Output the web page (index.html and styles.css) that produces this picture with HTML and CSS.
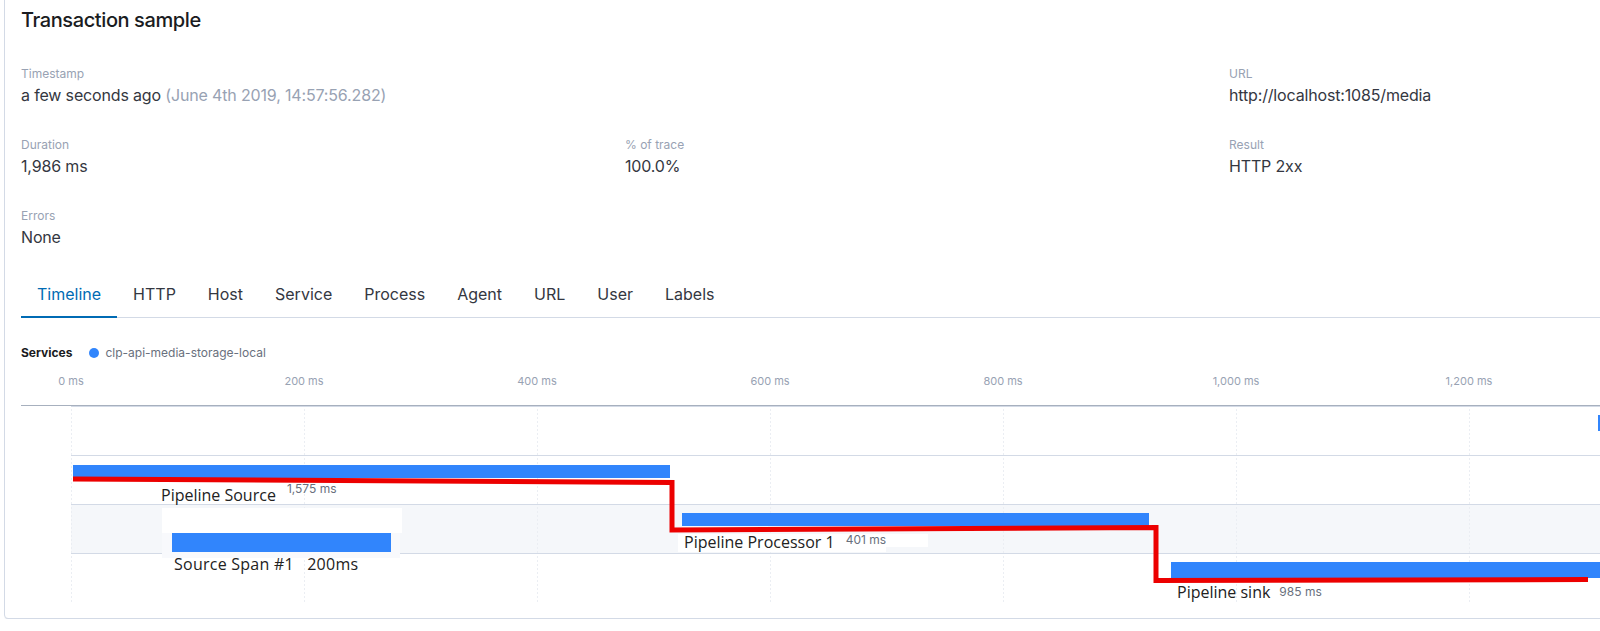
FILE: index.html
```html
<!DOCTYPE html>
<html lang="en">
<head>
<meta charset="utf-8">
<title>Transaction sample</title>
<link rel="stylesheet" href="styles.css">
</head>
<body>
<div class="page">
  <section class="card">
    <h2 class="title">Transaction sample</h2>

    <div class="meta">
      <div class="meta-item">
        <div class="meta-label">Timestamp</div>
        <div class="meta-value">a few seconds ago <span class="muted">(June 4th 2019, 14:57:56.282)</span></div>
      </div>
      <div class="meta-item"></div>
      <div class="meta-item">
        <div class="meta-label">URL</div>
        <div class="meta-value">http://localhost:1085/media</div>
      </div>
      <div class="meta-item">
        <div class="meta-label">Duration</div>
        <div class="meta-value">1,986 ms</div>
      </div>
      <div class="meta-item">
        <div class="meta-label">% of trace</div>
        <div class="meta-value">100.0%</div>
      </div>
      <div class="meta-item">
        <div class="meta-label">Result</div>
        <div class="meta-value">HTTP 2xx</div>
      </div>
      <div class="meta-item">
        <div class="meta-label">Errors</div>
        <div class="meta-value">None</div>
      </div>
    </div>

    <nav class="tabs">
      <span class="tab active">Timeline</span>
      <span class="tab">HTTP</span>
      <span class="tab">Host</span>
      <span class="tab">Service</span>
      <span class="tab">Process</span>
      <span class="tab">Agent</span>
      <span class="tab">URL</span>
      <span class="tab">User</span>
      <span class="tab">Labels</span>
    </nav>

    <div class="legend">
      <span class="legend-title">Services</span>
      <span class="dot"></span>
      <span class="legend-name">clp-api-media-storage-local</span>
    </div>

    <div class="axis">
      <span class="tick"><span>0 ms</span></span>
      <span class="tick"><span>200 ms</span></span>
      <span class="tick"><span>400 ms</span></span>
      <span class="tick"><span>600 ms</span></span>
      <span class="tick"><span>800 ms</span></span>
      <span class="tick"><span>1,000 ms</span></span>
      <span class="tick"><span>1,200 ms</span></span>
    </div>

    <div class="waterfall">
      <div class="row">
        <div class="bar bar-edge" style="margin-left:1527px;width:10px"></div>
      </div>

      <div class="row">
        <div class="bar bar-source" style="margin-left:2px;width:597px"></div>
        <div class="item-label label-source" style="margin-left:90px">
          <span class="span-name">Pipeline Source</span>
          <span class="span-dur">1,575 ms</span>
        </div>
      </div>

      <div class="row alt">
        <div class="row-inner">
          <div class="pasted-span" style="margin-left:91px">
            <div class="patch-white"></div>
            <div class="patch-light">
              <div class="bar bar-child" style="width:219px"></div>
            </div>
            <div class="pasted-text">Source Span #1   200ms</div>
          </div>
          <div class="processor" style="margin-left:276px">
            <div class="bar bar-proc" style="margin-left:4px;width:467px"></div>
            <div class="proc-label">
              <div class="name-box">
                <span class="span-name">Pipeline Processor 1</span>
                <span class="span-dur">401 ms</span>
              </div>
              <div class="patch-small"></div>
            </div>
          </div>
        </div>
      </div>

      <div class="row">
        <div class="bar bar-sink" style="margin-left:1100px;width:1148px"></div>
        <div class="item-label label-sink" style="margin-left:1106px">
          <span class="span-name">Pipeline sink</span>
          <span class="span-dur">985 ms</span>
        </div>
      </div>

      <svg class="trace-line" width="1600" height="200" viewBox="0 0 1600 200" aria-hidden="true">
        <polyline points="2,73 601,76.5 601,124 1085,121.5 1085,174.5 1517,173.5" fill="none" stroke="#EC0000" stroke-width="5" stroke-linejoin="miter"/>
      </svg>
    </div>
  </section>
</div>
</body>
</html>
```

FILE: styles.css
```css
html, body {
  margin: 0;
  padding: 0;
  background: #fff;
  overflow: hidden;
}

body {
  font-family: Inter, "Liberation Sans", sans-serif;
  color: #343741;
}

.page {
  padding-left: 4px;
}

.card {
  box-sizing: border-box;
  width: 1822px;
  margin-top: -9px;
  padding: 16px;
  background: #fff;
  border: 1px solid #D3DAE6;
  border-radius: 4px;
  box-shadow: 0 1px 1px -1px rgba(152, 162, 179, 0.3), 0 3px 2px -2px rgba(152, 162, 179, 0.3);
}

.title {
  margin: 0;
  font-size: 20px;
  line-height: 24px;
  font-weight: 500;
  letter-spacing: -0.02em;
  color: #1A1C21;
}

/* metadata grid */
.meta {
  display: grid;
  grid-template-columns: repeat(3, 1fr);
  column-gap: 24px;
  row-gap: 29px;
  margin-top: 33px;
}

.meta-label {
  font-size: 12px;
  line-height: 18px;
  color: #98A2B3;
}

.meta-value {
  font-size: 16px;
  line-height: 24px;
  letter-spacing: -0.01em;
  color: #343741;
}

.muted {
  color: #98A2B3;
}

/* tabs */
.tabs {
  display: flex;
  margin-top: 21px;
  border-bottom: 1px solid #D3DAE6;
}

.tab {
  padding: 12px 16px;
  margin-bottom: -1px;
  font-size: 16px;
  line-height: 24px;
  color: #343741;
}

.tab.active {
  color: #006BB4;
  box-shadow: inset 0 -2px 0 #006BB4;
}

/* legend */
.legend {
  display: flex;
  align-items: center;
  margin-top: 26px;
  font-size: 12px;
  line-height: 18px;
}

.legend-title {
  font-weight: 700;
  color: #1A1C21;
  margin-right: 17px;
}

.dot {
  width: 10px;
  height: 10px;
  border-radius: 50%;
  background: #3185FC;
  margin-right: 6px;
}

.legend-name {
  color: #69707D;
}

/* axis */
.axis {
  display: flex;
  gap: 233px;
  margin-top: 10px;
  padding: 0 0 15px 50px;
  border-bottom: 1px solid #A7B0BE;
  font-size: 11px;
  line-height: 18px;
  color: #98A2B3;
}

.tick {
  flex: none;
  width: 0;
  white-space: nowrap;
}

.tick span {
  display: inline-block;
  transform: translateX(-50%);
}

/* waterfall */
.waterfall {
  position: relative;
  margin-left: 50px;
}

.row {
  --bg: #fff;
  box-sizing: border-box;
  height: 49px;
  border-top: 1px solid #D3DAE6;
  background-color: var(--bg);
  background-image:
    repeating-linear-gradient(to bottom, var(--bg) 0 2px, transparent 2px 4px),
    linear-gradient(to right, #EBEEF3 0 1px, transparent 1px);
  background-size: auto, 233px 100%;
}

.row.alt {
  --bg: #F5F7FA;
}

.row-inner {
  display: flex;
  align-items: flex-start;
}

.bar {
  background: #3185FC;
}

.bar-edge {
  margin-top: 8px;
  height: 16px;
}

.bar-source {
  margin-top: 9px;
  height: 13px;
}

.bar-child {
  height: 19px;
}

.bar-proc {
  margin-top: 8px;
  height: 13px;
}

.bar-sink {
  margin-top: 8px;
  height: 16px;
}

.item-label {
  display: flex;
  align-items: flex-start;
  white-space: nowrap;
}

.span-name {
  font-family: "Open Sans", "Liberation Sans", sans-serif;
  font-size: 16px;
  line-height: 20px;
  color: #222;
}

.span-dur {
  font-size: 12px;
  line-height: 14px;
  color: #69707D;
}

.label-source {
  margin-top: 4px;
}

.label-source .span-name {
  margin-top: 3px;
}

.label-source .span-dur {
  margin-left: 11px;
}

.label-sink {
  margin-top: 4px;
}

.label-sink .span-dur {
  margin-left: 9px;
  margin-top: 3px;
}

/* pasted child span */
.pasted-span {
  width: 240px;
}

.patch-white {
  margin-top: 3px;
  height: 25px;
  background: #fff;
}

.patch-light {
  position: relative;
  z-index: 1;
  box-sizing: border-box;
  width: 238px;
  height: 25px;
  padding-left: 10px;
  background: #F8F9FC;
}

.pasted-text {
  position: relative;
  z-index: 2;
  margin-top: -4px;
  margin-left: 12px;
  font-family: "Open Sans", "Liberation Sans", sans-serif;
  font-size: 16px;
  line-height: 20px;
  letter-spacing: 0.25px;
  color: #222;
  white-space: pre;
}

/* processor */
.processor {
  width: 480px;
}

.proc-label {
  display: flex;
  align-items: flex-start;
  margin-top: 8px;
}

.name-box {
  box-sizing: border-box;
  display: flex;
  align-items: flex-start;
  width: 208px;
  height: 18px;
  padding-left: 6px;
  background: #fff;
  white-space: nowrap;
}

.name-box .span-name {
  line-height: 16px;
}

.name-box .span-dur {
  margin-left: 11px;
  margin-top: -1px;
}

.patch-small {
  width: 42px;
  height: 13px;
  background: #fff;
}

.trace-line {
  position: absolute;
  left: 0;
  top: 0;
  overflow: visible;
  pointer-events: none;
}
```
